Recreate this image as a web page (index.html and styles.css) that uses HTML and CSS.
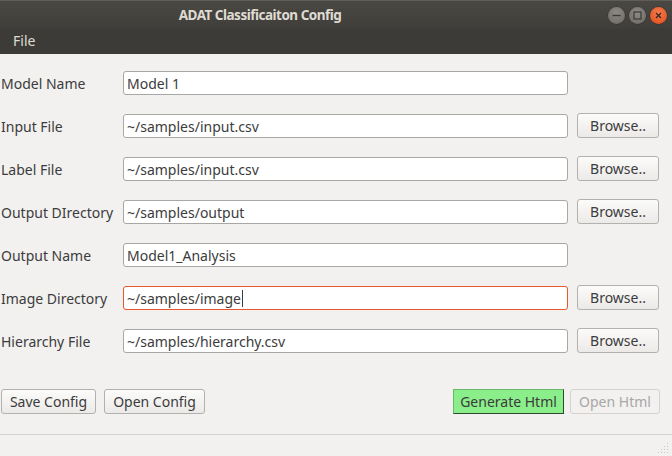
FILE: index.html
```html
<!DOCTYPE html>
<html>
<head>
<meta charset="utf-8">
<link rel="stylesheet" href="styles.css">
</head>
<body>
<div class="window">
  <div class="titlebar">
    <div class="title">ADAT Classificaiton Config</div>
    <div class="wbtns">
      <span class="wbtn min"><svg width="17" height="17" viewBox="0 0 17 17"><path d="M4.5 8.5h8" stroke="#3a3935" stroke-width="1.4"/></svg></span>
      <span class="wbtn max"><svg width="17" height="17" viewBox="0 0 17 17"><rect x="5" y="5" width="7" height="7" fill="none" stroke="#3a3935" stroke-width="1.2"/></svg></span>
      <span class="wbtn close"><svg width="17" height="17" viewBox="0 0 17 17"><path d="M6 6l5 5M11 6l-5 5" stroke="#3a2a22" stroke-width="1.4"/></svg></span>
    </div>
  </div>
  <div class="menubar"><span class="menu">File</span></div>
  <div class="content">
    <div class="form">
      <label class="lbl">Model Name</label>
      <div class="field">Model 1</div>
      <div></div>

      <label class="lbl">Input File</label>
      <div class="field">~/samples/input.csv</div>
      <button class="btn">Browse..</button>

      <label class="lbl">Label File</label>
      <div class="field">~/samples/input.csv</div>
      <button class="btn">Browse..</button>

      <label class="lbl">Output DIrectory</label>
      <div class="field">~/samples/output</div>
      <button class="btn">Browse..</button>

      <label class="lbl">Output Name</label>
      <div class="field">Model1_Analysis</div>
      <div></div>

      <label class="lbl">Image Directory</label>
      <div class="field focus">~/samples/image<span class="caret"></span></div>
      <button class="btn">Browse..</button>

      <label class="lbl">Hierarchy File</label>
      <div class="field">~/samples/hierarchy.csv</div>
      <button class="btn">Browse..</button>
    </div>
    <div class="actions">
      <button class="btn save">Save Config</button>
      <button class="btn open">Open Config</button>
      <span class="spacer"></span>
      <button class="btn gen">Generate Html</button>
      <button class="btn disabled ohtml">Open Html</button>
    </div>
  </div>
  <div class="statusbar">
    <svg class="grip" width="12" height="12" viewBox="0 0 12 12">
      <g fill="#c9c7c3">
        <rect x="9" y="1" width="1" height="1"/>
        <rect x="6" y="4" width="1" height="1"/><rect x="9" y="4" width="1" height="1"/>
        <rect x="3" y="7" width="1" height="1"/><rect x="6" y="7" width="1" height="1"/><rect x="9" y="7" width="1" height="1"/>
        <rect x="0" y="10" width="1" height="1"/><rect x="3" y="10" width="1" height="1"/><rect x="6" y="10" width="1" height="1"/><rect x="9" y="10" width="1" height="1"/>
      </g>
    </svg>
  </div>
</div>
</body>
</html>
```
FILE: styles.css
```css
* { box-sizing: border-box; }
html, body { margin: 0; padding: 0; }
body {
  width: 672px;
  height: 456px;
  overflow: hidden;
  background: #f2f1f0;
  font-family: "Noto Sans", "DejaVu Sans", sans-serif;
  font-size: 14px;
  color: #3c3c3c;
}
.window { width: 672px; height: 456px; display: flex; flex-direction: column; }
.titlebar {
  height: 29px;
  background: linear-gradient(#4a4843, #403e3a);
  border-top: 1px solid #5f5d58;
  display: flex;
  align-items: center;
  justify-content: center;
  padding-right: 152px;
  position: relative;
}
.title { color: #dfdbd2; font-weight: bold; font-size: 13.5px; letter-spacing: -0.5px; }
.wbtns { position: absolute; right: 5px; top: 6px; display: flex; gap: 4px; }
.wbtn {
  width: 17px; height: 17px; border-radius: 50%;
  display: block;
  background: radial-gradient(circle at 50% 35%, #8d8a84, #6b6863);
  box-shadow: 0 0 0 0.5px #2e2d2a;
}
.wbtn svg { display: block; }
.wbtn.close { background: radial-gradient(circle at 50% 35%, #f47b4f, #df4a16); }
.menubar {
  height: 25px;
  background: #3c3b37;
  color: #dfdbd2;
  display: flex;
  align-items: center;
  padding-left: 13px;
  padding-bottom: 2px;
}
.menu { font-size: 14px; }
.content { flex: 1; display: flex; flex-direction: column; padding-top: 17px; }
.form {
  display: grid;
  grid-template-columns: 113px 445px 82px;
  column-gap: 9px;
  row-gap: 19px;
  padding-left: 1px;
}
.lbl { display: flex; align-items: center; height: 24px; white-space: nowrap; }
.field {
  height: 24px;
  background: #fff;
  border: 1px solid #a9a7a3;
  border-radius: 3px;
  padding: 0 3px;
  display: flex;
  align-items: center;
  color: #3c3c3c;
  white-space: nowrap;
}
.field.focus { border-color: #e6582b; }
.caret { display: inline-block; width: 1px; height: 17px; background: #3c3c3c; margin-left: 1px; }
.btn {
  height: 25px;
  margin-top: -1px;
  font-family: inherit;
  font-size: 14px;
  color: #3c3c3c;
  background: linear-gradient(#fbfbfa, #eceae8);
  border: 1px solid #b3b1ad;
  border-radius: 3px;
  padding: 0 6px;
  white-space: nowrap;
}
.actions {
  display: flex;
  align-items: center;
  margin-top: 36px;
  padding-left: 1px;
  padding-right: 12px;
  height: 25px;
}
.actions .btn { margin-top: 0; }
.save { width: 95px; }
.open { width: 101px; margin-left: 8px; }
.spacer { flex: 1; }
.gen {
  width: 111px;
  background: #8aee8a;
  border: 1px solid #6bb86b;
  border-right-color: #2e4a2e;
  border-bottom-color: #2e4a2e;
  border-radius: 0;
}
.ohtml { width: 90px; margin-left: 6px; }
.btn.disabled { color: #a8a7a4; background: #f2f1f0; border-color: #d5d3cf; }
.statusbar {
  height: 22px;
  border-top: 1px solid #d6d4d0;
  position: relative;
}
.grip { position: absolute; right: 2px; bottom: 2px; }
```
